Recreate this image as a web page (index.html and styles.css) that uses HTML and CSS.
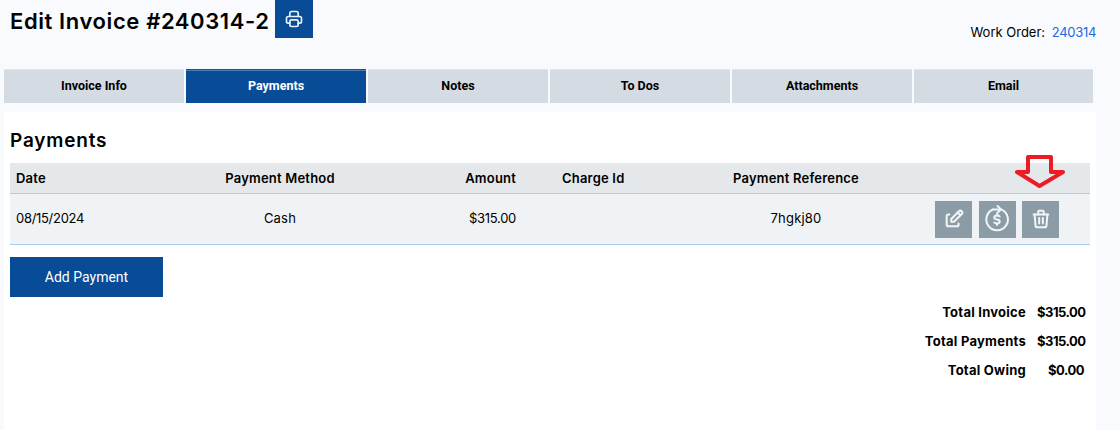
FILE: index.html
```html
<!DOCTYPE html>
<html lang="en">
<head>
    <meta charset="UTF-8">
    <meta name="viewport" content="width=device-width, initial-scale=1.0">
    <title>Edit Invoice</title>
    <link rel="stylesheet" href="styles.css">
</head>
<body>
    <header class="page-head">
        <div class="title-group">
            <h1>Edit Invoice #240314-2</h1>
            <button class="print-btn" aria-label="Print">
                <svg width="20" height="20" viewBox="0 0 24 24" fill="none" stroke="currentColor" stroke-width="2" stroke-linecap="round" stroke-linejoin="round">
                    <path d="M17 17h2a2 2 0 0 0 2-2v-4a2 2 0 0 0-2-2H5a2 2 0 0 0-2 2v4a2 2 0 0 0 2 2h2"/>
                    <path d="M17 9V5a2 2 0 0 0-2-2H9a2 2 0 0 0-2 2v4"/>
                    <rect x="7" y="13" width="10" height="8" rx="2"/>
                </svg>
            </button>
        </div>
        <div class="work-order">Work Order: <a href="#">240314</a></div>
    </header>

    <nav class="tabs">
        <a class="tab" href="#">Invoice Info</a>
        <a class="tab active" href="#">Payments</a>
        <a class="tab" href="#">Notes</a>
        <a class="tab" href="#">To Dos</a>
        <a class="tab" href="#">Attachments</a>
        <a class="tab" href="#">Email</a>
    </nav>

    <main class="card">
        <h2>Payments</h2>

        <div class="pay-table">
            <div class="pay-row pay-head">
                <div>Date</div>
                <div class="center">Payment Method</div>
                <div class="right">Amount</div>
                <div class="charge">Charge Id</div>
                <div class="center">Payment Reference</div>
                <div></div>
            </div>
            <div class="pay-row pay-body">
                <div class="num">08/15/2024</div>
                <div class="center">Cash</div>
                <div class="right num">$315.00</div>
                <div class="charge"></div>
                <div class="center">7hgkj80</div>
                <div class="actions">
                    <button class="icon-btn" aria-label="Edit">
                        <svg width="22" height="22" viewBox="0 0 24 24" fill="none" stroke="currentColor" stroke-width="2.200" stroke-linecap="round" stroke-linejoin="round">
                            <path d="M7 7H6a2 2 0 0 0-2 2v9a2 2 0 0 0 2 2h9a2 2 0 0 0 2-2v-1"/>
                            <path d="M20.400 6.600a2.100 2.100 0 0 0-3-3L9 12v3h3z"/>
                            <path d="M16 5l3 3"/>
                        </svg>
                    </button>
                    <button class="icon-btn" aria-label="Refund">
                        <svg width="32" height="32" viewBox="0 0 32 32" fill="none" stroke="currentColor" stroke-width="2" stroke-linecap="round" stroke-linejoin="round">
                            <path d="M12 6.500a10.800 10.800 0 1 0 8-.100"/>
                            <path d="M12 6.500h8"/>
                            <path d="M16.500 3l3.500 3.400-3.500 3.400"/>
                            <path d="M18.700 13.500a2.700 1.800 0 0 0-2.700-1c-1.500 0-2.700.7-2.700 2s1.200 1.800 2.700 2 2.700.8 2.700 2-1.200 2-2.700 2a2.700 1.800 0 0 1-2.700-1"/>
                            <path d="M16 11v1.500M16 20.500V22"/>
                        </svg>
                    </button>
                    <button class="icon-btn" aria-label="Delete">
                        <svg width="22" height="22" viewBox="0 0 24 24" fill="none" stroke="currentColor" stroke-width="2.200" stroke-linecap="round" stroke-linejoin="round">
                            <path d="M4 7h16"/>
                            <path d="M10 11v6M14 11v6"/>
                            <path d="M5 7l1 12a2 2 0 0 0 2 2h8a2 2 0 0 0 2-2l1-12"/>
                            <path d="M9 7V4a1 1 0 0 1 1-1h4a1 1 0 0 1 1 1v3"/>
                        </svg>
                    </button>
                </div>
            </div>
            <svg class="arrow" width="52" height="36" viewBox="0 0 52 36" fill="none" stroke="#ed1c24" stroke-width="4" stroke-linejoin="round">
                <path d="M14 3h23v15h12L25.500 32 3 18h11z"/>
            </svg>
        </div>

        <button class="add-btn">Add Payment</button>

        <div class="totals">
            <div class="total-row"><span>Total Invoice</span><span class="total-val">$315.00</span></div>
            <div class="total-row"><span>Total Payments</span><span class="total-val">$315.00</span></div>
            <div class="total-row"><span>Total Owing</span><span class="total-val">$0.00</span></div>
        </div>
    </main>
</body>
</html>
```

FILE: styles.css
```css
:root {
    --navy: #084b97;
    --tab: #d4dbe2;
    --slate: #8b9ca6;
    --line: #a9cdf0;
}

* {
    box-sizing: border-box;
    margin: 0;
    padding: 0;
}

body {
    height: 430px;
    overflow: hidden;
    background: #f8fafd;
    color: #000;
    font-family: Inter, "Noto Sans", sans-serif;
    font-size: 13px;
}

.page-head {
    display: flex;
    justify-content: space-between;
    height: 69px;
    padding-left: 10px;
}

.title-group {
    display: flex;
    align-items: flex-start;
    gap: 5px;
}

h1 {
    font-size: 22px;
    font-weight: 600;
    line-height: 42px;
    letter-spacing: 0.6px;
}

.print-btn {
    display: flex;
    align-items: center;
    justify-content: center;
    width: 38px;
    height: 38px;
    border: 0;
    background: var(--navy);
    color: #e8f0f8;
}

.work-order {
    margin: 24px 24px 0 0;
    font-size: 13px;
    line-height: 16px;
}

.work-order a {
    margin-left: 3px;
    color: #2268e0;
    letter-spacing: -0.3px;
    text-decoration: none;
}

.tabs {
    display: grid;
    grid-template-columns: repeat(6, 180px);
    gap: 2px;
    padding-left: 4px;
}

.tab {
    height: 34px;
    background: var(--tab);
    border-top: 1px solid #e2e7ec;
    color: #000;
    font-family: Roboto, sans-serif;
    font-size: 12.500px;
    font-weight: 700;
    line-height: 32px;
    text-align: center;
    text-decoration: none;
}

.tab:last-child {
    width: 179px;
}

.tab.active {
    background: var(--navy);
    border-top: 1px solid #c0141c;
    box-shadow: inset 0 1px 0 #4a7db5;
    color: #fff;
    line-height: 32px;
}

.card {
    width: 1092px;
    height: 318px;
    margin: 9px 0 0 4px;
    padding: 18px 6px 0;
    background: #fff;
}

h2 {
    height: 33px;
    font-size: 19px;
    font-weight: 600;
    line-height: 22px;
    letter-spacing: 0.8px;
}

.pay-table {
    position: relative;
    width: 1080px;
}

.pay-row {
    display: grid;
    grid-template-columns: 140px 260px 112px 168px 212px 188px;
    align-items: center;
    border-bottom: 1px solid var(--line);
}

.pay-row > div:first-child {
    padding-left: 6px;
}

.pay-head {
    height: 31px;
    background: #e5e8eb;
    font-weight: 600;
    letter-spacing: 0.2px;
}

.pay-body {
    height: 51px;
    padding-bottom: 2px;
    background: #f0f3f5;
    letter-spacing: 0.2px;
}

.pay-body .num {
    letter-spacing: -0.3px;
}

.center {
    text-align: center;
}

.right {
    padding-right: 6px;
    text-align: right;
}

.charge {
    padding-left: 40px;
}

.actions {
    display: flex;
    gap: 6.500px;
    padding-left: 33px;
    margin-top: 2px;
}

.icon-btn {
    display: flex;
    align-items: center;
    justify-content: center;
    width: 37px;
    height: 37px;
    border: 0;
    background: var(--slate);
    color: #f2f5f7;
}

.arrow {
    position: absolute;
    top: -9px;
    left: 1004px;
}

.add-btn {
    display: block;
    width: 153px;
    height: 40px;
    margin-top: 12px;
    border: 0;
    background: var(--navy);
    color: #fff;
    font-family: Roboto, sans-serif;
    font-size: 14px;
}

.totals {
    display: flex;
    flex-direction: column;
    gap: 11px;
    margin-top: 6px;
    padding-right: 6px;
    font-weight: 700;
}

.total-row {
    display: flex;
    justify-content: flex-end;
    gap: 11px;
    line-height: 18px;
    letter-spacing: 0.25px;
}

.total-val {
    width: 47px;
    letter-spacing: -0.5px;
    text-align: right;
}
```
